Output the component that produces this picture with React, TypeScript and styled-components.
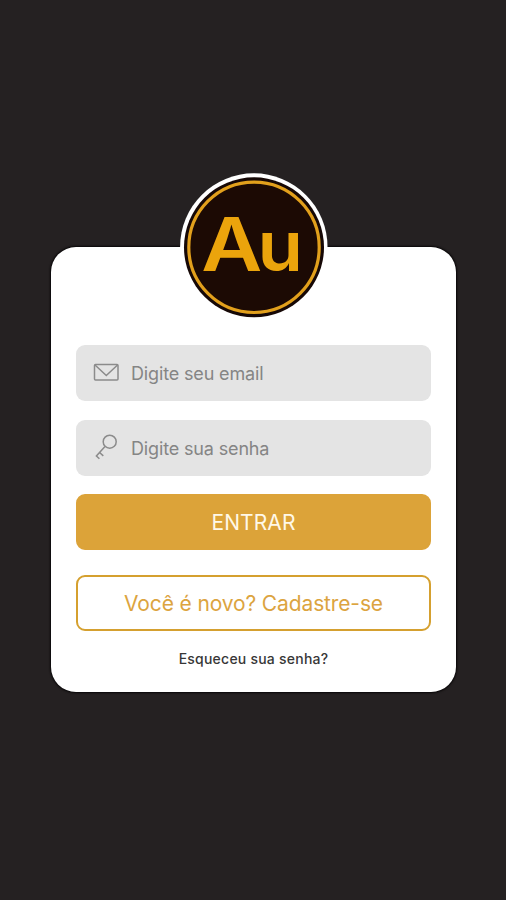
import React from "react";
import styled, { createGlobalStyle } from "styled-components";

const GlobalStyle = createGlobalStyle`
  * { box-sizing: border-box; }
  body { margin: 0; background: #252122; font-family: Inter, "Liberation Sans", sans-serif; }
`;

const Page = styled.main`
  min-height: 900px;
  padding: 247px 50px 0 51px;
  background: #252122;
`;

const Card = styled.form`
  position: relative;
  display: flex;
  flex-direction: column;
  height: 445px;
  padding: 98px 25px 0;
  border-radius: 25px;
  background: #fff;
  box-shadow: 0 0 2px 1px #080607;
`;

const Logo = styled.svg`
  position: absolute;
  top: -75px;
  left: 128px;
  width: 150px;
  height: 150px;
`;

const LogoText = styled.text`
  font-family: Inter, sans-serif;
  font-weight: 600;
  fill: #eba40c;
`;

const Field = styled.label`
  display: flex;
  align-items: center;
  height: 56px;
  margin-bottom: 18.5px;
  padding-left: 15px;
  border-radius: 9px;
  background: #e4e4e4;
`;

const FieldIcon = styled.svg`
  flex: none;
  width: 32px;
  height: 32px;
  fill: none;
  stroke: #8b8b8b;
  stroke-width: 1.5;
`;

const Input = styled.input`
  flex: 1;
  min-width: 0;
  height: 100%;
  margin-left: 8px;
  padding: 1px 0 0;
  border: 0;
  outline: 0;
  background: transparent;
  font: 400 18px Inter, sans-serif;
  letter-spacing: -0.15px;
  &::placeholder { color: #858585; opacity: 1; }
`;

const Button = styled.button<{ $outlined?: boolean }>`
  height: 56px;
  margin: 0 0 ${(p) => (p.$outlined ? 0 : 24.5)}px;
  padding: 1px 0 0;
  border: 2px solid ${(p) => (p.$outlined ? "#d5a02f" : "#dca339")};
  border-radius: 9px;
  background: ${(p) => (p.$outlined ? "#fff" : "#dca339")};
  color: ${(p) => (p.$outlined ? "#dca43f" : "#fff8e8")};
  font: 400 21px Inter, sans-serif;
  letter-spacing: ${(p) => (p.$outlined ? "-0.13px" : "0.1px")};
`;

const Forgot = styled.a`
  align-self: center;
  margin-top: 19px;
  color: #373737;
  font: 500 14px/18px Inter, sans-serif;
  letter-spacing: 0.23px;
`;

export default function App() {
  return (
    <>
      <GlobalStyle />
      <Page>
        <Card>
          <Logo viewBox="0 0 150 150" role="img" aria-label="Au">
            <circle cx="74.8" cy="75" r="73.7" fill="#fff" />
            <circle cx="75" cy="75.3" r="70" fill="#160806" />
            <circle cx="75" cy="75.3" r="65.2" fill="#1c0a04" stroke="#e2a01c" strokeWidth="3.2" />
            <LogoText x="22.3" y="99" fontSize="74" textLength="61" lengthAdjust="spacingAndGlyphs">A</LogoText>
            <LogoText x="78.5" y="99" fontSize="70" textLength="45.5" lengthAdjust="spacingAndGlyphs">u</LogoText>
          </Logo>
          <Field>
            <FieldIcon viewBox="0 0 32 32">
              <rect x="3.5" y="7.5" width="23.5" height="15.5" rx="1" />
              <path d="M4 8L15.3 18.5L26.5 8" />
            </FieldIcon>
            <Input type="email" aria-label="Email" placeholder="Digite seu email" />
          </Field>
          <Field>
            <FieldIcon viewBox="0 0 32 32">
              <circle cx="18.7" cy="9.7" r="6.5" />
              <path d="M14 14.5L5.4 24l3 2.7M8.6 20.5l3.7 3.4" />
            </FieldIcon>
            <Input type="password" aria-label="Senha" placeholder="Digite sua senha" />
          </Field>
          <Button type="button">ENTRAR</Button>
          <Button type="button" $outlined>Você é novo? Cadastre-se</Button>
          <Forgot>Esqueceu sua senha?</Forgot>
        </Card>
      </Page>
    </>
  );
}
